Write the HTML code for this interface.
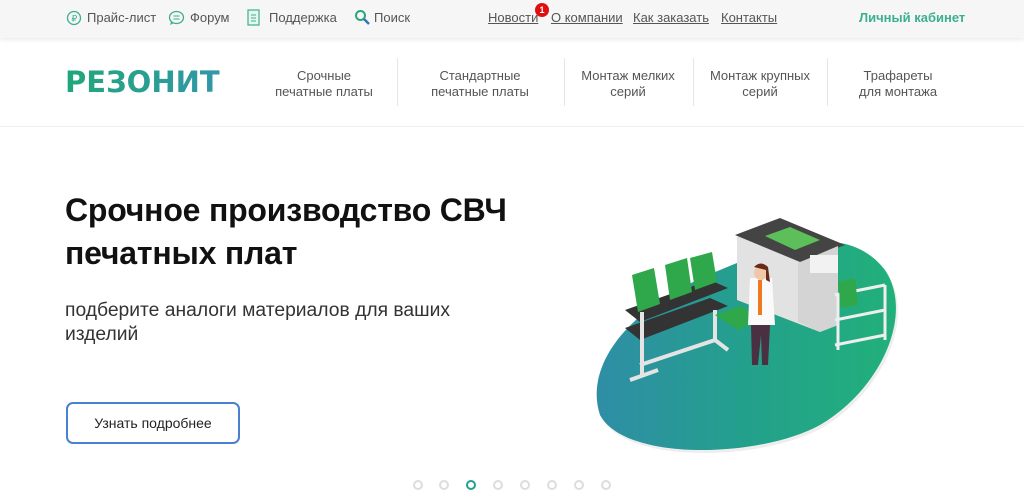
<!DOCTYPE html>
<html><head><meta charset="utf-8"><style>
*{margin:0;padding:0;box-sizing:border-box}
body{width:1024px;height:497px;overflow:hidden;background:#fff;font-family:"Liberation Sans",sans-serif;position:relative}
.a{position:absolute;white-space:nowrap}
.top{position:absolute;left:0;top:0;width:1024px;height:38px;background:#f6f6f6;box-shadow:0 2px 4px rgba(0,0,0,.08)}
.tl{font-size:13px;color:#555;top:10px}
.tr{font-size:13px;color:#555;top:10px;text-decoration:underline}
.nav{font-size:13px;color:#555;text-align:center;line-height:16px;top:68px;transform:translateX(-50%)}
.div{position:absolute;top:58px;width:1px;height:48px;background:#e6e6e6}
.dot{position:absolute;top:480px;width:10px;height:10px;border-radius:50%;border:2px solid #ddd}
</style></head><body>
<div class="top"></div>
<svg class="a" style="left:66px;top:10px" width="16" height="16"><circle cx="8" cy="8" r="6.5" fill="none" stroke="#3bb08f" stroke-width="1.3"/><text x="5.5" y="11.5" font-size="9" fill="#3bb08f" font-family="Liberation Sans">₽</text></svg>
<div class="a tl" style="left:87px">Прайс-лист</div>
<svg class="a" style="left:168px;top:10px" width="17" height="16"><ellipse cx="8.5" cy="7.5" rx="7" ry="6" fill="none" stroke="#3bb08f" stroke-width="1.3"/><path d="M3 12 L2 15 L6 13" fill="#3bb08f"/><path d="M5.5 6h6M5.5 9h6" stroke="#3bb08f"/></svg>
<div class="a tl" style="left:190px">Форум</div>
<svg class="a" style="left:247px;top:9px" width="13" height="17"><rect x="1" y="1" width="11" height="15" fill="#e8f6f0" stroke="#3bb08f" stroke-width="1.2"/><path d="M4 6h5M4 9h5M4 12h5" stroke="#3bb08f"/></svg>
<div class="a tl" style="left:269px">Поддержка</div>
<svg class="a" style="left:354px;top:9px" width="17" height="17"><circle cx="6.5" cy="6.5" r="4.5" fill="none" stroke="#2aa57c" stroke-width="2"/><path d="M10 10l5 5" stroke="#3a6fb8" stroke-width="2.4"/></svg>
<div class="a tl" style="left:374px">Поиск</div>
<div class="a tr" style="left:488px">Новости</div>
<div class="a" style="left:535px;top:3px;width:14px;height:14px;border-radius:50%;background:#e01010;color:#fff;font-size:9px;font-weight:bold;text-align:center;line-height:14px">1</div>
<div class="a tr" style="left:551px">О компании</div>
<div class="a tr" style="left:633px">Как заказать</div>
<div class="a tr" style="left:721px">Контакты</div>
<div class="a" style="left:859px;top:10px;font-size:13px;font-weight:bold;color:#3bb08f">Личный кабинет</div>
<div class="a" style="left:65px;top:67px;font-size:29px;font-weight:900;background:linear-gradient(90deg,#21a77a,#3197a8);-webkit-background-clip:text;color:transparent;font-family:'DejaVu Sans',sans-serif;line-height:30px;transform:scaleX(1.0);transform-origin:left">РЕЗОНИТ</div>
<div class="a nav" style="left:324px">Срочные<br>печатные платы</div>
<div class="div" style="left:397px"></div>
<div class="a nav" style="left:480px">Стандартные<br>печатные платы</div>
<div class="div" style="left:564px"></div>
<div class="a nav" style="left:628px">Монтаж мелких<br>серий</div>
<div class="div" style="left:693px"></div>
<div class="a nav" style="left:760px">Монтаж крупных<br>серий</div>
<div class="div" style="left:827px"></div>
<div class="a nav" style="left:898px">Трафареты<br>для монтажа</div>
<div class="a" style="left:0;top:126px;width:1024px;height:1px;background:#eee"></div>
<div class="a" style="left:65px;top:189px;font-size:32px;font-weight:bold;color:#111;line-height:43px;letter-spacing:-0.2px">Срочное производство СВЧ<br>печатных плат</div>
<div class="a" style="left:65px;top:299px;font-size:19.3px;color:#333;line-height:24px">подберите аналоги материалов для ваших<br>изделий</div>
<div class="a" style="left:66px;top:402px;width:174px;height:42px;border:2px solid #4a80d0;border-radius:7px;text-align:center;line-height:38px;font-size:14px;color:#222">Узнать подробнее</div>
<svg class="a" style="left:580px;top:200px" width="330" height="255">
<defs><linearGradient id="g" x1="0" x2="1"><stop offset="0" stop-color="#2f8ea6"/><stop offset=".5" stop-color="#23a08c"/><stop offset="1" stop-color="#22b07a"/></linearGradient></defs>
<path d="M20 215 C5 170 40 110 140 70 C210 40 270 25 305 70 C335 115 300 190 240 225 C180 258 45 262 20 215Z" fill="#eee" transform="translate(2,3)"/>
<path d="M20 215 C5 170 40 110 140 70 C210 40 270 25 305 70 C335 115 300 190 240 225 C180 258 45 262 20 215Z" fill="url(#g)"/>
<path d="M45 110 L130 80 L148 88 L60 122Z" fill="#333"/>
<path d="M45 128 L130 98 L148 106 L60 140Z" fill="#333"/>
<path d="M52 75 L58 112 L80 104 L74 68Z M85 65 L90 100 L112 92 L107 58Z M110 58 L115 90 L137 82 L132 52Z" fill="#2ea84a"/>
<path d="M62 112 L62 175 M50 180 L78 170 M60 165 L135 140 L135 110 M135 140 L148 150" stroke="#e4e4e4" stroke-width="4" fill="none"/>
<path d="M157 37 L200 20 L258 45 L258 125 L240 132 L157 100Z" fill="#e2e2e2"/>
<path d="M155 35 L200 18 L265 45 L220 62Z" fill="#444"/>
<path d="M185 36 L210 27 L240 40 L215 50Z" fill="#5cbf5a"/>
<path d="M218 63 L258 46 L258 125 L240 132 L218 122Z" fill="#d4d4d4"/>
<rect x="230" y="55" width="28" height="18" fill="#f2f2f2"/>
<path d="M255 95 L305 85 M255 120 L305 110 M255 145 L305 135 M258 95 L258 150 M305 85 L305 140" stroke="#eee" stroke-width="3" fill="none"/>
<path d="M258 82 L275 78 L278 105 L261 108Z" fill="#2ea84a"/>
<path d="M135 115 L160 106 L185 118 L158 130Z" fill="#2ea84a"/>
<path d="M170 78 L192 78 L195 125 L168 125Z" fill="#fafafa"/>
<rect x="178" y="80" width="4" height="35" fill="#f07820"/>
<circle cx="181" cy="73" r="7" fill="#f0c8a8"/>
<path d="M174 67 Q181 60 188 67 L190 82 L186 80 L186 70 Z" fill="#6a2a1a"/>
<path d="M171 125 L190 125 L188 165 L182 165 L181 135 L178 165 L172 165Z" fill="#4a3040"/>
</svg>
<div class="dot" style="left:413px"></div>
<div class="dot" style="left:439px"></div>
<div class="dot" style="left:466px;border-color:#23a08c;border-width:2.5px"></div>
<div class="dot" style="left:493px"></div>
<div class="dot" style="left:520px"></div>
<div class="dot" style="left:547px"></div>
<div class="dot" style="left:574px"></div>
<div class="dot" style="left:601px"></div>
</body></html>
